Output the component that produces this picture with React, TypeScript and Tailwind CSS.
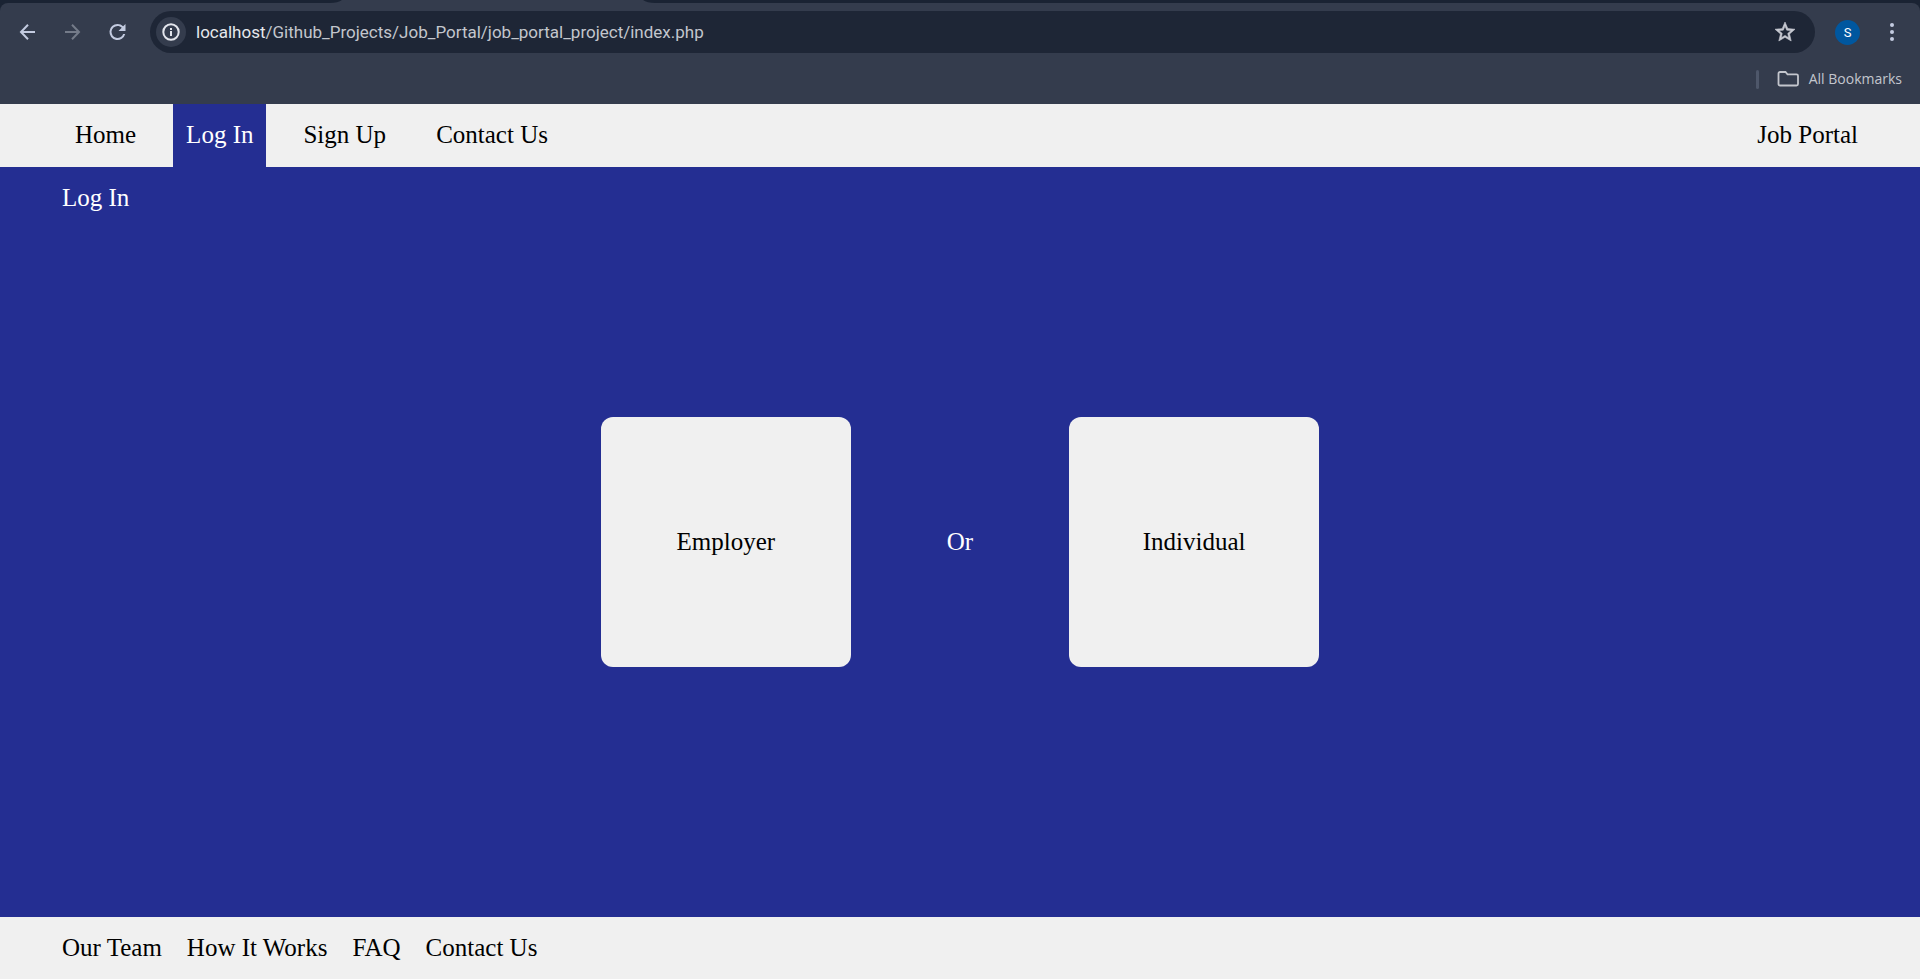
import React from "react";

const navLinks = ["Home", "Log In", "Sign Up", "Contact Us"];
const footerLinks = ["Our Team", "How It Works", "FAQ", "Contact Us"];

function BrowserChrome() {
  return (
    <div className="bg-[#1a2333] font-['Open_Sans','Noto_Sans',sans-serif]">
      <svg className="block h-[3px] w-[1000px]" viewBox="0 0 1000 3" aria-hidden="true">
        <path d="M330 3 Q338 3 342 0 H643 Q647 3 655 3 Z" fill="#343c4d" />
      </svg>
      <div className="flex h-[101px] flex-col rounded-t-lg bg-[#343c4d]">
        <div className="flex h-[58px] items-center pr-4">
          <div className="flex items-center gap-[21px] pl-4">
            <button aria-label="Back" className="size-6 text-[#c3cbe0]">
              <svg viewBox="0 0 24 24" className="size-6" fill="none" stroke="currentColor" strokeWidth="2">
                <path d="M19 12H5.5M12 4.8 5 12l7 7.2" />
              </svg>
            </button>
            <button aria-label="Forward" className="size-6 text-[#747b89]">
              <svg viewBox="0 0 24 24" className="size-6" fill="none" stroke="currentColor" strokeWidth="2">
                <path d="M4 12h13.500M11 4.8 18 12l-7 7.2" />
              </svg>
            </button>
            <button aria-label="Reload" className="size-6 text-[#c3cbe0]">
              <svg viewBox="0 0 24 24" className="size-6" fill="currentColor">
                <path d="M17.15 6.35A7.950 7.950 0 0 0 11.500 4a8 8 0 1 0 7.730 10h-2.080A6 6 0 1 1 11.500 6c1.660 0 3.140.69 4.220 1.780L12.500 11h7V4l-2.350 2.350z" />
              </svg>
            </button>
          </div>
          <div className="ml-5 flex h-[42px] flex-1 items-center rounded-full bg-[#1e2636] pr-[18px] pl-[6px]">
            <button aria-label="Site information" className="flex size-[30px] items-center justify-center rounded-full bg-[#343c4d] text-[#e3e5ec]">
              <svg viewBox="0 0 20 20" className="size-5" fill="none" stroke="currentColor" strokeWidth="2">
                <circle cx="10" cy="10" r="7.7" />
                <path d="M10 9v5M10 6v2" />
              </svg>
            </button>
            <span className="ml-[10px] flex-1 font-['Roboto',sans-serif] text-[17px] text-[#c3c6cd]">
              <span className="text-[#e6e8ec]">localhost</span>/Github_Projects/Job_Portal/job_portal_project/index.php
            </span>
            <button aria-label="Bookmark this tab" className="text-[#c7cad2]">
              <svg viewBox="0 0 24 24" className="size-6" fill="currentColor" stroke="currentColor" strokeWidth="0.6">
                <path d="m22 9.24-7.19-.62L12 2 9.19 8.63 2 9.24l5.46 4.73L5.82 21 12 17.27 18.18 21l-1.63-7.03L22 9.24zM12 15.4l-3.76 2.27 1-4.28-3.32-2.88 4.38-.38L12 6.1l1.71 4.04 4.38.38-3.32 2.88 1 4.28L12 15.4z" />
              </svg>
            </button>
          </div>
          <button aria-label="Profile" className="ml-5 size-[25px] rounded-full bg-[#00579f] font-['Roboto',sans-serif] text-[13px] leading-none text-white">S</button>
          <button aria-label="Menu" className="ml-5 size-6 text-[#c3cbe0]">
            <svg viewBox="0 0 24 24" className="size-6" fill="currentColor">
              <circle cx="12" cy="5" r="2" />
              <circle cx="12" cy="12" r="2" />
              <circle cx="12" cy="19" r="2" />
            </svg>
          </button>
        </div>
        <div className="flex h-9 items-center justify-end pr-[18px]">
          <span className="mr-[18px] h-[19px] w-[3px] rounded-full bg-[#4e576a]" />
          <button className="flex items-center gap-2 text-sm text-[#c3c6cd]">
            <svg viewBox="0 0 24 24" className="size-6" fill="none" stroke="currentColor" strokeWidth="1.8">
              <path d="M3 5h5.500l2 2.300h9a1.500 1.500 0 0 1 1.500 1.500v8.200a1.500 1.500 0 0 1-1.500 1.500h-16.500a1.500 1.500 0 0 1-1.500-1.500v-10.500a1.500 1.500 0 0 1 1.500-1.500z" />
            </svg>
            All Bookmarks
          </button>
        </div>
      </div>
    </div>
  );
}

function ChoiceCard({ label }: { label: string }) {
  return (
    <button className="size-[250px] cursor-pointer rounded-xl bg-[#f0f0f0] text-black">{label}</button>
  );
}

export default function App() {
  return (
    <div className="flex min-h-screen flex-col bg-[#242e92] font-['Liberation_Serif',serif] text-[25px] leading-7 text-black">
      <BrowserChrome />
      <header className="flex items-stretch justify-between bg-[#f0f0f0] px-[62px]">
        <nav className="flex gap-6">
          {navLinks.map((label) => (
            <a
              key={label}
              href="#"
              className={label === "Log In" ? "bg-[#242e92] px-[13px] pt-[17px] pb-[18px] text-white" : "px-[13px] pt-[17px] pb-[18px]"}
            >
              {label}
            </a>
          ))}
        </nav>
        <a href="#" className="pt-[17px] pb-[18px]">Job Portal</a>
      </header>
      <main className="grid flex-1 grid-rows-[1fr_auto_1fr] text-white">
        <h1 className="px-[62px] pt-[17px]">Log In</h1>
        <div className="flex items-center justify-center gap-24">
          <ChoiceCard label="Employer" />
          <span>Or</span>
          <ChoiceCard label="Individual" />
        </div>
      </main>
      <footer className="flex gap-[25px] bg-[#f0f0f0] px-[62px] py-[17px]">
        {footerLinks.map((label) => (
          <a key={label} href="#">{label}</a>
        ))}
      </footer>
    </div>
  );
}
